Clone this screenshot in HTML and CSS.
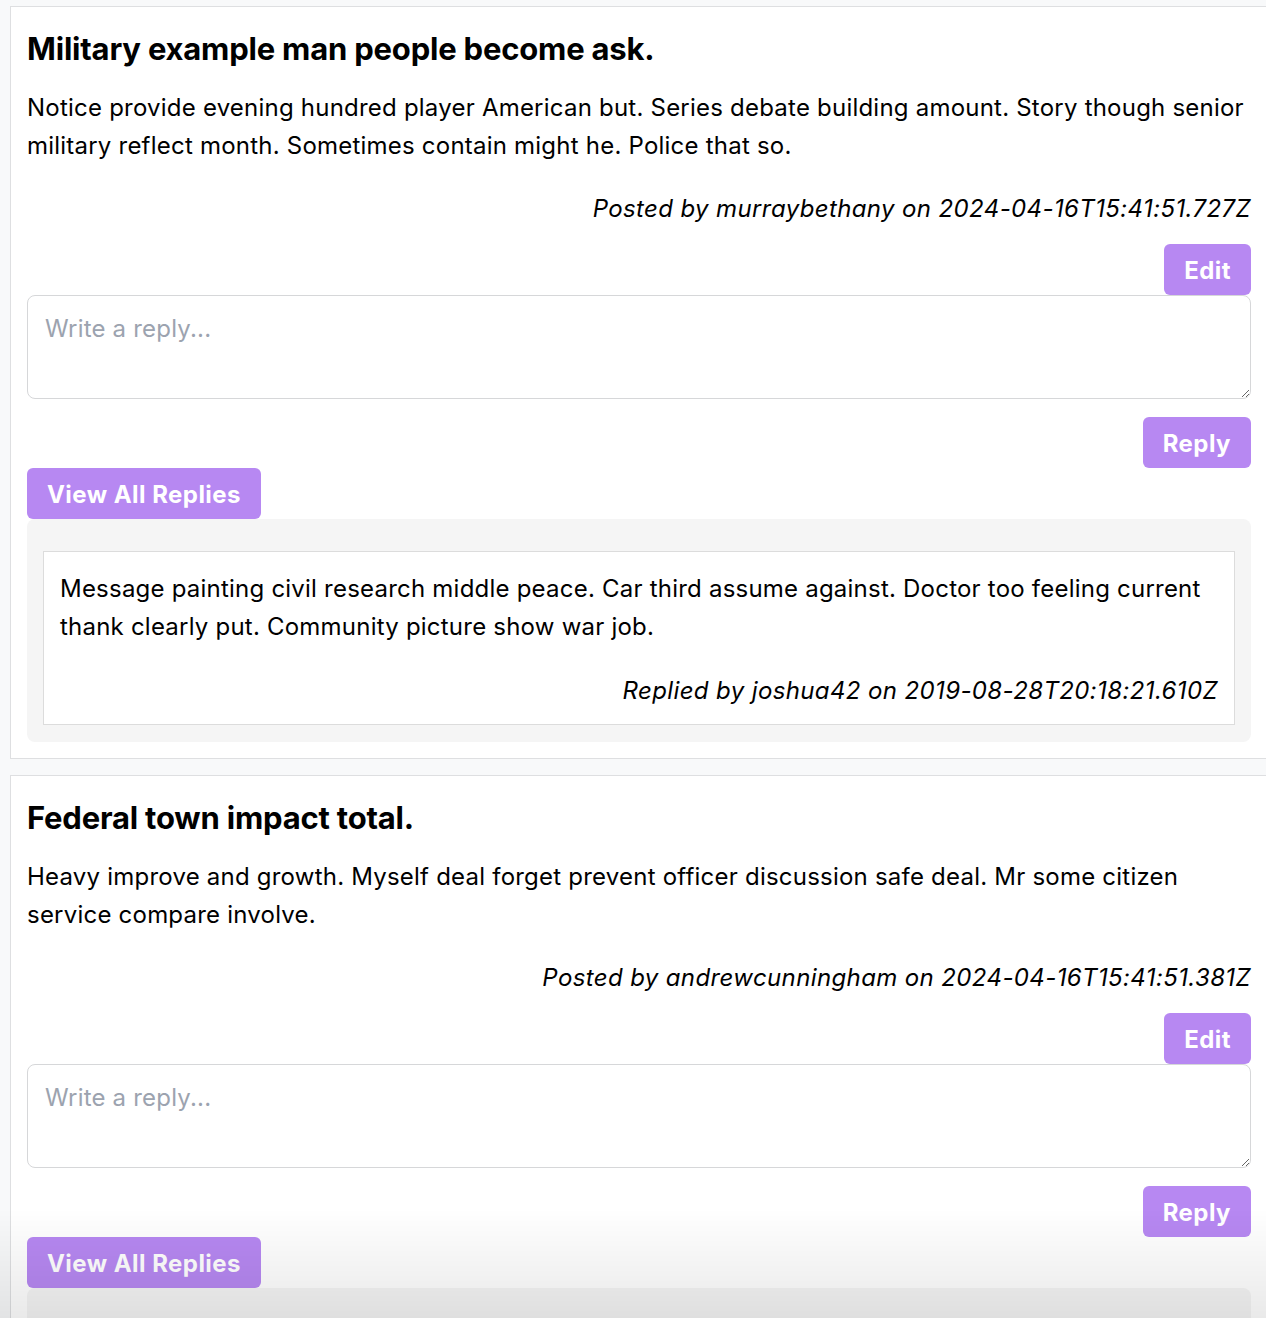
FILE: index.html
```html
<!DOCTYPE html>
<html lang="en">
<head>
<meta charset="utf-8">
<title>Posts</title>
<link rel="stylesheet" href="styles.css">
</head>
<body>
<main class="feed">
  <article class="post">
    <h2 class="post-title">Military example man people become ask.</h2>
    <p class="post-body">Notice provide evening hundred player American but. Series debate building amount. Story though senior military reflect month. Sometimes contain might he. Police that so.</p>
    <p class="post-meta">Posted by murraybethany on 2024-04-16T15:41:51.727Z</p>
    <div class="row-end"><button class="btn">Edit</button></div>
    <textarea class="reply-input" placeholder="Write a reply..."></textarea>
    <div class="row-end reply-row"><button class="btn">Reply</button></div>
    <button class="btn">View All Replies</button>
    <div class="replies">
      <div class="reply">
        <p class="reply-body">Message painting civil research middle peace. Car third assume against. Doctor too feeling current thank clearly put. Community picture show war job.</p>
        <p class="post-meta">Replied by joshua42 on 2019-08-28T20:18:21.610Z</p>
      </div>
    </div>
  </article>
  <article class="post">
    <h2 class="post-title">Federal town impact total.</h2>
    <p class="post-body">Heavy improve and growth. Myself deal forget prevent officer discussion safe deal. Mr some citizen service compare involve.</p>
    <p class="post-meta">Posted by andrewcunningham on 2024-04-16T15:41:51.381Z</p>
    <div class="row-end"><button class="btn">Edit</button></div>
    <textarea class="reply-input" placeholder="Write a reply..."></textarea>
    <div class="row-end reply-row"><button class="btn">Reply</button></div>
    <button class="btn">View All Replies</button>
    <div class="replies">
      <div class="reply">
        <p class="reply-body">&nbsp;</p>
      </div>
    </div>
  </article>
</main>
<div class="fade"></div>
</body>
</html>
```
FILE: styles.css
```css
html, body {
  margin: 0;
  padding: 0;
  background: #f8f9fa;
  overflow: hidden;
}
body {
  font-family: Inter, "Noto Sans", "Liberation Sans", sans-serif;
  color: #000;
}
.feed {
  padding: 6px 0 0 10px;
  display: flex;
  flex-direction: column;
  gap: 16px;
}
.post {
  width: 1258px;
  box-sizing: border-box;
  background: #fff;
  border: 1px solid #dedfe1;
  padding: 16px;
  display: flex;
  flex-direction: column;
  align-items: flex-start;
}
.post-title {
  margin: 6px 0 20px;
  font-size: 31px;
  line-height: 40px;
  font-weight: 700;
  letter-spacing: -0.2px;
}
.post-body, .reply-body {
  margin: 0;
  font-size: 24px;
  line-height: 38px;
  letter-spacing: 0.22px;
}
.post-meta {
  align-self: stretch;
  margin: 25px 0 0;
  font-size: 24px;
  line-height: 38px;
  font-style: italic;
  text-align: right;
  letter-spacing: 0.38px;
}
.row-end {
  align-self: stretch;
  display: flex;
  justify-content: flex-end;
  margin-top: 16px;
}
.reply-row {
  margin-top: 18px;
}
.btn {
  font-family: inherit;
  font-size: 24px;
  font-weight: 700;
  letter-spacing: 0.45px;
  color: #fff;
  background: #b788f2;
  border: 0;
  border-radius: 6px;
  height: 51px;
  padding: 0 20px;
  line-height: 53px;
}
.reply-input {
  align-self: stretch;
  box-sizing: border-box;
  height: 104px;
  margin-top: 0;
  padding: 17px 17px;
  border: 1px solid #d6d7d9;
  border-radius: 8px;
  font-family: inherit;
  font-size: 24px;
  line-height: 32px;
  letter-spacing: 0.2px;
  resize: vertical;
}
.reply-input::placeholder {
  color: #9ca3af;
}
.replies {
  align-self: stretch;
  background: #f5f5f5;
  border-radius: 8px;
  padding: 32px 16px 17px;
}
.reply {
  background: #fff;
  border: 1px solid #dcdcdc;
  padding: 18px 16px 14px;
}
.reply .post-meta {
  margin-top: 26px;
}
.fade {
  position: fixed;
  left: 0;
  right: 0;
  bottom: 0;
  height: 110px;
  background: linear-gradient(to bottom, rgba(0,0,0,0), rgba(0,0,0,0.085));
  pointer-events: none;
}
```
